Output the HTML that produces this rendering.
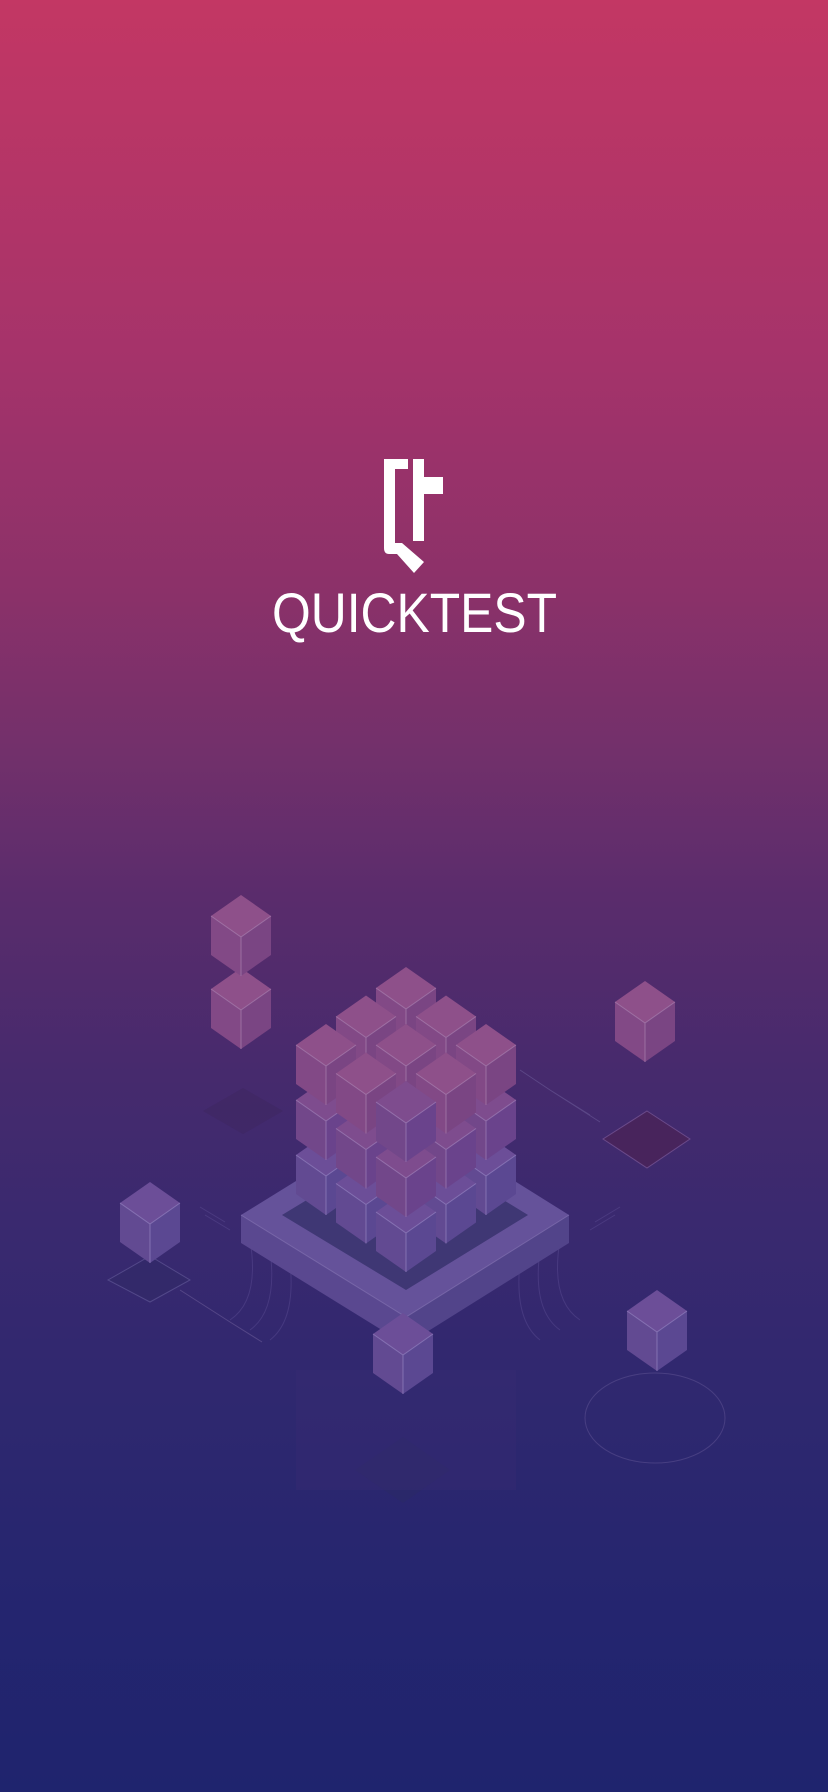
<!DOCTYPE html>
<html><head><meta charset="utf-8"><style>
html,body{margin:0;padding:0}
body{width:828px;height:1792px;overflow:hidden;background:linear-gradient(180deg,#c33764 0%,#a5336a 20%,#8b3169 33%,#72306b 42%,#5a2c6c 50%,#462a6d 60%,#3a296f 68%,#2f286f 78%,#24256f 90%,#1f246e 100%)}
svg{position:absolute;left:0;top:0}
</style></head><body>
<svg width="828" height="1792" viewBox="0 0 828 1792" xmlns="http://www.w3.org/2000/svg">
<defs>
<g id="cA"><path d="M0 0L30 21L0 42L-30 21Z" fill="#8e508a"/><path d="M-30 21L0 42L0 81L-30 60Z" fill="#824986"/><path d="M0 42L30 21L30 60L0 81Z" fill="#7a4583"/><path d="M-30 21L0 42L30 21M0 42L0 81" stroke="#b08ab8" stroke-width="1" fill="none" opacity=".6"/></g>
<g id="cB"><path d="M0 0L30 21L0 42L-30 21Z" fill="#7e4c8e"/><path d="M-30 21L0 42L0 81L-30 60Z" fill="#72478a"/><path d="M0 42L30 21L30 60L0 81Z" fill="#6a438c"/><path d="M-30 21L0 42L30 21M0 42L0 81" stroke="#a98bc0" stroke-width="1" fill="none" opacity=".6"/></g>
<g id="cC"><path d="M0 0L30 21L0 42L-30 21Z" fill="#6c4e98"/><path d="M-30 21L0 42L0 81L-30 60Z" fill="#624a92"/><path d="M0 42L30 21L30 60L0 81Z" fill="#5b4892"/><path d="M-30 21L0 42L30 21M0 42L0 81" stroke="#9c8cc8" stroke-width="1" fill="none" opacity=".6"/></g>
</defs>

<!-- logo -->
<g fill="#fff">
<path d="M384 459H408V469H395V543H402L424 562L414 573L397 554H389Q384 554 384 548Z"/>
<rect x="413" y="459" width="11" height="82"/>
<rect x="424" y="477" width="19" height="17"/>
</g>
<text x="272" y="632" textLength="285" lengthAdjust="spacingAndGlyphs" font-family="Liberation Sans, sans-serif" font-size="56" fill="#fff">QUICKTEST</text>

<!-- faint shadows -->
<path d="M203 1111L243 1088L283 1111L243 1134Z" fill="#3e2560" opacity=".5"/>
<path d="M647 1111L690 1139L647 1168L603 1139Z" fill="#48245c" stroke="#6a4a8a" stroke-width="1"/>
<path d="M150 1256L190 1280L150 1302L108 1280Z" fill="#332a6a" stroke="#5a5090" stroke-width="1" opacity=".8"/>
<path d="M403 1437L450 1470L403 1503L355 1470Z" fill="#2c2a68" opacity=".6"/>
<rect x="296" y="1370" width="220" height="120" fill="#3a2a72" opacity=".35"/>
<ellipse cx="655" cy="1418" rx="70" ry="45" fill="none" stroke="#5a4e90" stroke-width="1" opacity=".6"/>
<path d="M520 1070L550 1090L590 1115M180 1290L230 1322L262 1342M550 1090L600 1122" stroke="#6a5a98" stroke-width="1" fill="none" opacity=".6"/>
<g stroke="#6a5aa0" stroke-width="1" fill="none" opacity=".35">
<path d="M250 1240Q260 1300 230 1320M270 1250Q278 1310 250 1330M290 1262Q296 1320 270 1340M560 1240Q550 1300 580 1320M540 1250Q532 1310 560 1330M520 1262Q514 1320 540 1340"/>
<path d="M230 1230L205 1215M225 1222L200 1207M590 1230L615 1215M595 1222L620 1207"/>
</g>

<!-- platform -->
<path d="M241 1215L406 1317L406 1345L241 1243Z" fill="#5a4890"/>
<path d="M406 1317L569 1215L569 1243L406 1345Z" fill="#52448a"/>
<path d="M406 1113L569 1215L406 1317L241 1215Z" fill="#65529a"/>
<path d="M406 1140L528 1215L406 1290L282 1215Z" fill="#3f3774"/>
<path d="M241 1215L406 1317L569 1215" stroke="#8a7ab8" stroke-width="1" fill="none" opacity=".6"/>

<!-- main cluster -->
<use href="#cC" x="406" y="1077"/>
<use href="#cC" x="366" y="1105.5"/><use href="#cC" x="446" y="1105.5"/><use href="#cB" x="406" y="1022"/>
<use href="#cC" x="326" y="1134"/><use href="#cC" x="406" y="1134"/><use href="#cC" x="486" y="1134"/><use href="#cB" x="366" y="1050.5"/><use href="#cB" x="446" y="1050.5"/><use href="#cA" x="406" y="967"/>
<use href="#cC" x="366" y="1162.5"/><use href="#cC" x="446" y="1162.5"/><use href="#cB" x="326" y="1079"/><use href="#cB" x="406" y="1079"/><use href="#cB" x="486" y="1079"/><use href="#cA" x="366" y="995.5"/><use href="#cA" x="446" y="995.5"/>
<use href="#cC" x="406" y="1191"/><use href="#cB" x="366" y="1107.5"/><use href="#cB" x="446" y="1107.5"/><use href="#cA" x="326" y="1024"/><use href="#cA" x="406" y="1024"/><use href="#cA" x="486" y="1024"/>
<use href="#cB" x="406" y="1136"/><use href="#cA" x="366" y="1052.5"/><use href="#cA" x="446" y="1052.5"/>
<use href="#cB" x="406" y="1081"/>

<!-- floating cubes -->
<use href="#cA" x="241" y="968"/>
<use href="#cA" x="241" y="895"/>
<use href="#cA" x="645" y="981"/>
<use href="#cC" x="150" y="1182"/>
<use href="#cC" x="657" y="1290"/>
<use href="#cC" x="403" y="1313"/>
</svg>
</body></html>
